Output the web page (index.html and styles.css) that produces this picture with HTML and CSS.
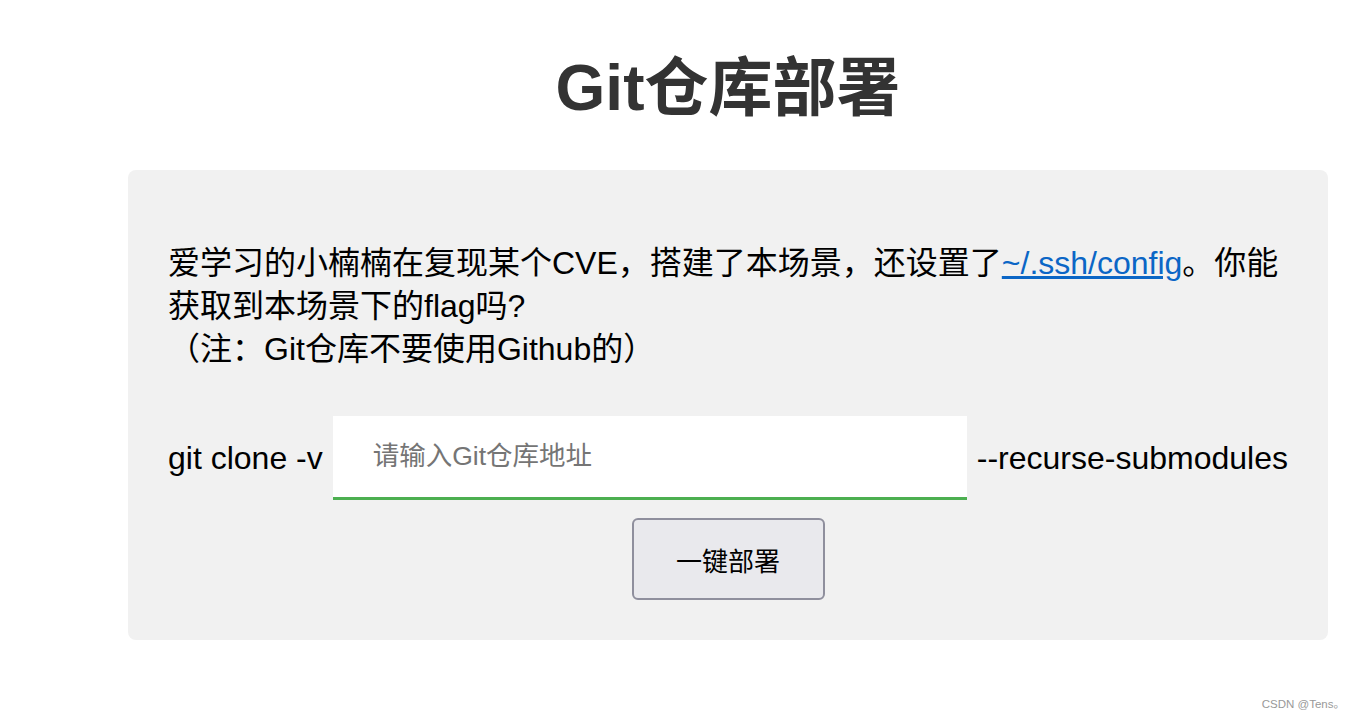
FILE: index.html
```html
<!DOCTYPE html>
<html lang="zh-CN">

<head>
  <meta charset="UTF-8" />
  <title>Git仓库部署</title>
  <link rel="stylesheet" href="styles.css">
</head>

<body>

  <div class="pagina">
    <h1 class="titulo">Git仓库部署</h1>

    <div class="caixa">
      <p class="desafio">爱学习的小楠楠在复现某个CVE，搭建了本场景，还设置了<a href="#">~/.ssh/config</a>。你能获取到本场景下的flag吗?<br>（注：Git仓库不要使用Github的）</p>

      <form class="linha-clone" onsubmit="return false;">
        <span class="cmd">git clone -v</span>
        <input type="text" class="repo" placeholder="请输入Git仓库地址">
        <span class="cmd">--recurse-submodules</span>
      </form>

      <div class="acoes">
        <button class="botao" type="button">一键部署</button>
      </div>
    </div>
  </div>

  <!-- marca d'agua -->
  <div class="marca">CSDN @Tens。</div>

</body>

</html>
```

FILE: styles.css
```css
body {
  margin: 0;
  background: #fff;
  font-family: "Liberation Sans", Arial, "Noto Sans CJK SC", sans-serif;
  color: #000;
  height: 720px;
  overflow: hidden;
}

.pagina {
  width: 1200px;
  margin-left: 128px;
}

.titulo {
  margin: 48px 0 0;
  height: 80px;
  line-height: 80px;
  font-size: 64px;
  font-weight: bold;
  color: #333;
  text-align: center;
}

.caixa {
  margin-top: 42px;
  height: 470px;
  box-sizing: border-box;
  padding: 72px 40px 0;
  background: #f1f1f1;
  border-radius: 8px;
}

.desafio {
  margin: 0;
  font-size: 32px;
  line-height: 43px;
}

.desafio a {
  color: #0b66c6;
  text-decoration: underline;
}

.linha-clone {
  margin: 45px 0 0;
  display: flex;
  align-items: center;
  gap: 10px;
  font-size: 32px;
}

.cmd {
  white-space: nowrap;
}

.repo {
  flex: 1;
  height: 84px;
  box-sizing: border-box;
  border: none;
  border-bottom: 3px solid #4caf50;
  background: #fff;
  padding: 0 40px;
  font-family: "Liberation Sans", "Noto Sans CJK SC", sans-serif;
  font-size: 26.5px;
  outline: none;
}

.repo::placeholder {
  color: #757575;
}

.acoes {
  margin-top: 18px;
  display: flex;
  justify-content: center;
}

.botao {
  width: 193px;
  height: 82px;
  background: #e9e9ed;
  border: 2px solid #8f8f9d;
  border-radius: 6px;
  font-family: "Liberation Sans", "Noto Sans CJK SC", sans-serif;
  font-size: 26px;
  color: #000;
  cursor: pointer;
}

.marca {
  position: absolute;
  right: 14px;
  bottom: 9px;
  font-family: "Liberation Sans", "Noto Sans CJK SC", sans-serif;
  font-size: 11.5px;
  color: #999;
}
```
